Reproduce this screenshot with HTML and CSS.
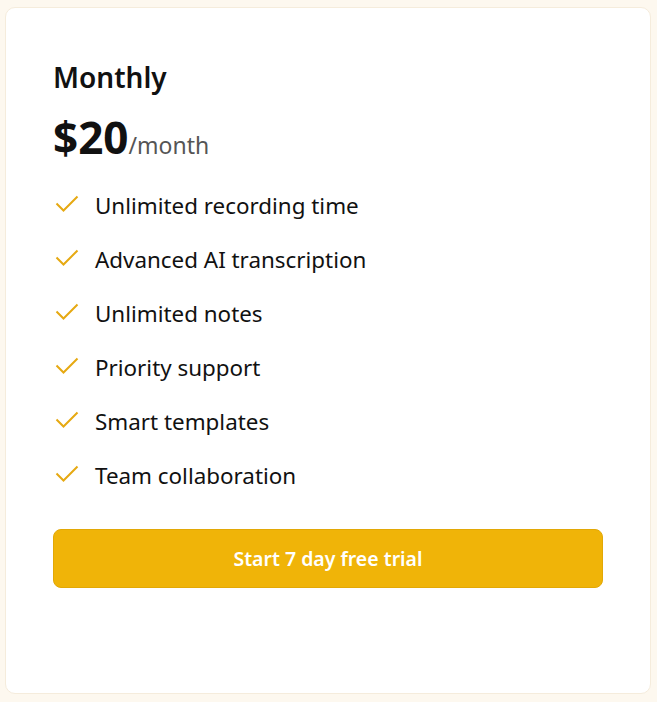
FILE: index.html
```html
<!DOCTYPE html>
<html lang="en">
<head>
  <meta charset="UTF-8" />
  <title>Pricing</title>
  <meta name="viewport" content="width=device-width, initial-scale=1" />
  <link rel="stylesheet" href="styles.css">
</head>
<body>

  <div class="card">
    <h2 class="plan">Monthly</h2>
    <div class="price"><span class="amount">$20</span><span class="period">/month</span></div>

    <ul class="features">
      <li><svg class="check" viewBox="0 0 24 18"><path d="M1.5 8.5L8.5 15.5L22.5 1.5" /></svg>Unlimited recording time</li>
      <li><svg class="check" viewBox="0 0 24 18"><path d="M1.5 8.5L8.5 15.5L22.5 1.5" /></svg>Advanced AI transcription</li>
      <li><svg class="check" viewBox="0 0 24 18"><path d="M1.5 8.5L8.5 15.5L22.5 1.5" /></svg>Unlimited notes</li>
      <li><svg class="check" viewBox="0 0 24 18"><path d="M1.5 8.5L8.5 15.5L22.5 1.5" /></svg>Priority support</li>
      <li><svg class="check" viewBox="0 0 24 18"><path d="M1.5 8.5L8.5 15.5L22.5 1.5" /></svg>Smart templates</li>
      <li><svg class="check" viewBox="0 0 24 18"><path d="M1.5 8.5L8.5 15.5L22.5 1.5" /></svg>Team collaboration</li>
    </ul>

    <button class="trial">Start 7 day free trial</button>
  </div>

</body>
</html>
```

FILE: styles.css
```css
html, body {
  margin: 0;
  height: 100%;
  background: #fdf8ef;
}
body {
  padding: 7px 6px 8px 5px;
  box-sizing: border-box;
  font-family: 'Noto Sans', 'Open Sans', sans-serif;
  color: #111;
}
.card {
  background: #fff;
  border: 1px solid #f5ecdc;
  border-radius: 10px;
  height: 100%;
  box-sizing: border-box;
  padding: 50px 47px 0;
}
.plan {
  margin: 0;
  font-size: 28px;
  font-weight: 600;
  line-height: 1.4;
}
.price {
  margin-top: 14px;
  line-height: 1.2;
}
.amount {
  font-size: 44px;
  font-weight: 700;
}
.period {
  font-size: 23px;
  color: #555;
}
.features {
  list-style: none;
  padding: 0;
  margin: 15px 0 0;
}
.features li {
  display: flex;
  align-items: center;
  gap: 16px;
  height: 54px;
  font-size: 22.4px;
}
.check {
  width: 24px;
  height: 18px;
  margin: -4px 0 0 2px;
  fill: none;
  stroke: #e6a912;
  stroke-width: 2;
}
.trial {
  display: block;
  width: 100%;
  height: 59px;
  margin-top: 26px;
  background: #f0b408;
  border: 1px solid #e2a806;
  border-radius: 8px;
  color: #fff;
  font-family: 'Noto Sans', 'Open Sans', sans-serif;
  font-size: 19.5px;
  font-weight: 600;
  padding-top: 2px;
  cursor: pointer;
}
```
